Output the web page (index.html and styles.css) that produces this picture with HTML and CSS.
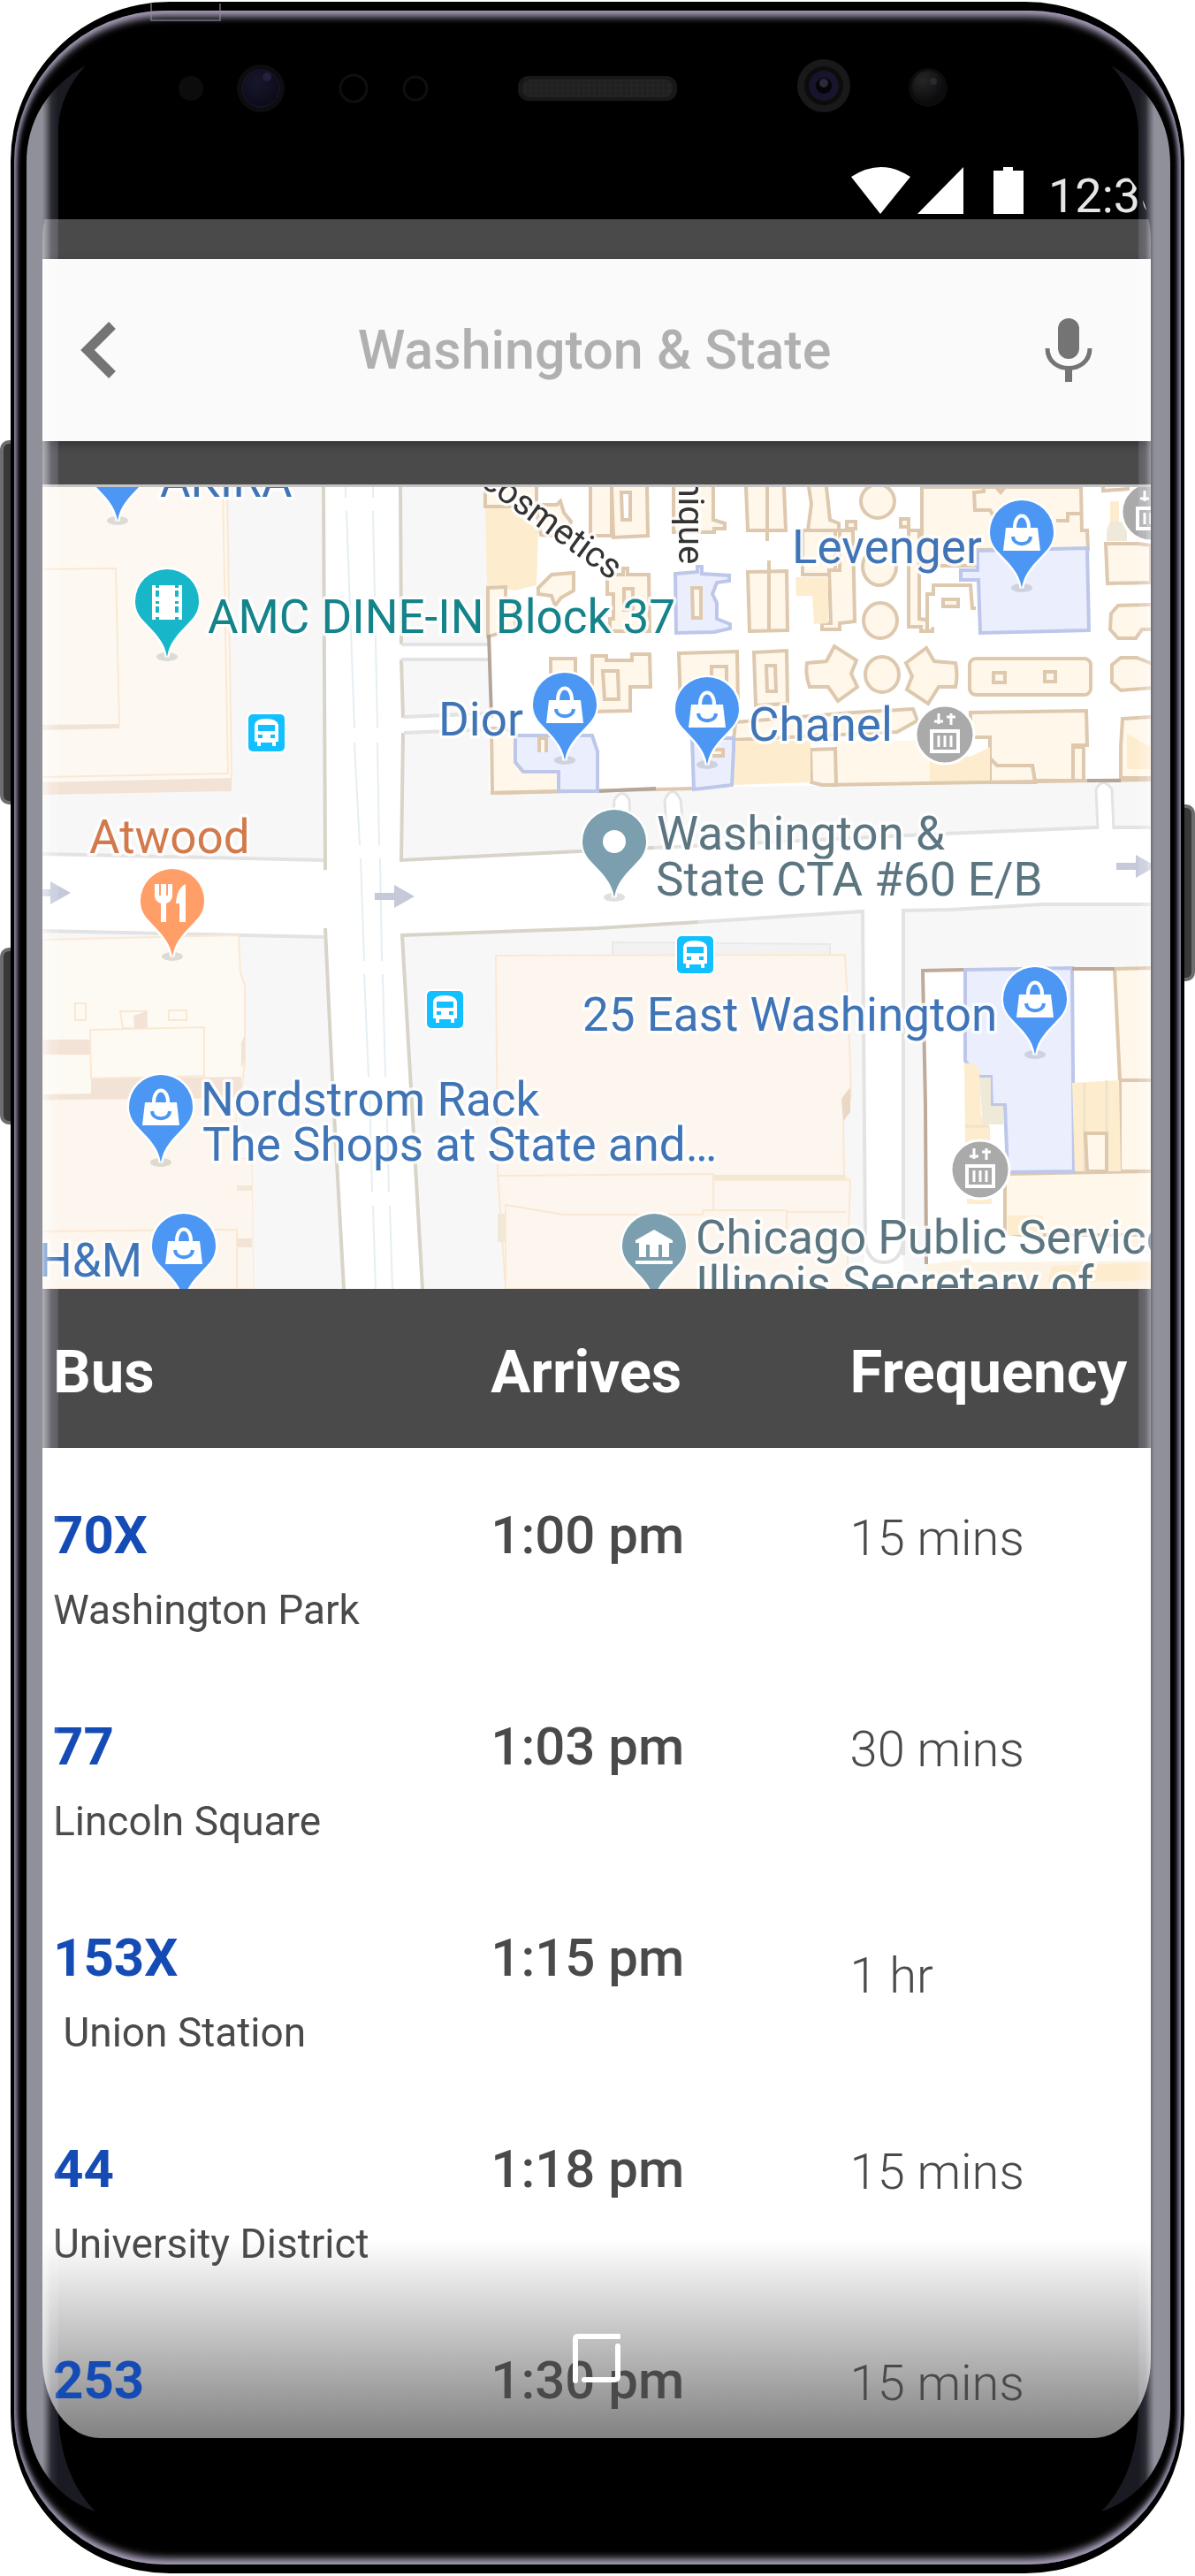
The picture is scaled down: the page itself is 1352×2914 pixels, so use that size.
FILE: index.html
```html
<!DOCTYPE html>
<html lang="en">
<head>
<meta charset="utf-8">
<meta name="viewport" content="width=device-width, initial-scale=1">
<title>Bus arrivals</title>
<link rel="stylesheet" href="styles.css">
</head>
<body>
<main class="device">
  <span class="key key-volume"></span>
  <span class="key key-assistant"></span>
  <span class="key key-power"></span>
  <div class="shell">
    <svg class="antenna" viewBox="0 0 80 20" aria-hidden="true"><path d="M1 0V19H79V0" fill="none" stroke="#8d8798" stroke-opacity=".6" stroke-width="2"/></svg>
    <div class="glass">
      <div class="bezel-top">
        <svg class="sensors" viewBox="200 60 880 80" aria-hidden="true">
          <defs>
            <radialGradient id="lens" cx=".4" cy=".35" r=".7"><stop offset="0" stop-color="#17172c"/><stop offset="1" stop-color="#0a0a18"/></radialGradient>
            <radialGradient id="dark" cx=".35" cy=".3" r=".7"><stop offset="0" stop-color="#262626"/><stop offset="1" stop-color="#0c0c0f"/></radialGradient>
            <pattern id="mesh" width="6" height="6" patternUnits="userSpaceOnUse"><rect width="6" height="6" fill="#202020"/><path d="M0 0H6M0 0V6" stroke="#2c2c2c"/></pattern>
          </defs>
          <circle cx="216" cy="100" r="14" fill="#0c0c0c"/>
          <circle cx="295" cy="100" r="27" fill="#0d0d0d"/><circle cx="295" cy="100" r="21" fill="url(#lens)" stroke="#1d1738"/><circle cx="302" cy="87" r="5" fill="#241f3d"/>
          <circle cx="400" cy="100" r="15" fill="none" stroke="#0f0f0f" stroke-width="3"/>
          <circle cx="470" cy="100" r="13" fill="none" stroke="#0f0f0f" stroke-width="3"/>
          <rect x="586" y="86" width="180" height="28" rx="12" fill="#181818"/><rect x="591" y="90" width="170" height="20" rx="9" fill="url(#mesh)"/>
          <circle cx="932" cy="97" r="30" fill="#191919"/><circle cx="932" cy="97" r="22" fill="#0c0c0c"/><circle cx="932" cy="97" r="17" fill="#17142b"/><circle cx="932" cy="97" r="9" fill="#050508"/><circle cx="932" cy="94" r="5" fill="#2b2a38"/>
          <circle cx="1050" cy="99" r="22" fill="#0c0c0c"/><circle cx="1050" cy="98" r="18" fill="url(#dark)"/><circle cx="1056" cy="92" r="4" fill="#2a2a2a"/>
        </svg>
      </div>

      <div class="screen">
        <div class="statusbar">
          <svg class="status-icons" viewBox="963 188 195 53" aria-hidden="true" fill="#fff">
            <path d="M963 199Q997 177 1030 199L996 241Z"/>
            <path d="M1038 241H1090V188Z"/>
            <path d="M1124 192H1135V188H1146V192H1158V241H1124Z"/>
          </svg>
          <time class="clock">12:30</time>
        </div>

        <div class="toolbar">
          <form class="search">
            <button class="icon-button icon-back" type="button" aria-label="Back">
              <svg width="40" height="64" viewBox="0 0 40 64"><path d="M36 4L8 32L36 60" fill="none" stroke="#747474" stroke-width="11"/></svg>
            </button>
            <input class="search-input" type="text" aria-label="Stop" value="Washington &amp; State">
            <button class="icon-button" type="button" aria-label="Voice search">
              <svg width="54" height="72" viewBox="0 0 54 72"><rect x="15" y="0" width="24" height="46" rx="12" fill="#747474"/><path d="M3 34C3 64 51 64 51 34" fill="none" stroke="#747474" stroke-width="5"/><path d="M23 55H31V72H23Z" fill="#747474"/></svg>
            </button>
          </form>
        </div>

        <svg class="map" viewBox="48 551 1254 907" role="img" aria-label="Map around Washington and State">
          <defs>
            <g id="pin">
              <ellipse cx="0" cy="0" rx="12" ry="5" fill="#000" fill-opacity=".12" stroke="none"/>
              <path d="M0 0C-3 -18 -14 -27 -24 -38C-31 -45 -36 -52 -36 -63A36 36 0 1 1 36 -63C36 -52 31 -45 24 -38C14 -27 3 -18 0 0Z" stroke="#fff" stroke-width="5" paint-order="stroke"/>
            </g>
            <g id="shop">
              <use href="#pin" fill="#4c97f3"/>
              <path d="M-18 -68H18L21 -42H-21Z" fill="#fff"/>
              <path d="M-8 -68C-8 -86 8 -86 8 -68" fill="none" stroke="#fff" stroke-width="4"/>
              <path d="M-10 -58C-9 -47 9 -47 10 -58" fill="none" stroke="#4c97f3" stroke-width="4"/>
            </g>
            <g id="bus">
              <rect width="41" height="42" rx="5" fill="#12c0ff" stroke="#fff" stroke-width="4" paint-order="stroke"/>
              <path d="M7 12Q8 5 20 5T34 12V31H31V36H27V32H14V36H10V31H7Z" fill="#fff"/>
              <path d="M11 12H30V19H11ZM11 23H16V27H11ZM25 23H30V27H25Z" fill="#12c0ff"/>
            </g>
            <g id="lift">
              <circle r="33" fill="#aaa" stroke="#fff" stroke-width="3"/>
              <path d="M-15 -4H15V19H-15Z" fill="none" stroke="#fff" stroke-width="4"/>
              <path d="M-7 1V14M0 1V14M7 1V14" stroke="#fff" stroke-width="3"/>
              <path d="M-7 -24V-12M-12 -15H-2M7 -24V-11M2 -20H12" stroke="#fff" stroke-width="3"/>
            </g>
            <path id="arrow" d="M0 -4H22V-13L45 0L22 13V4H0Z" fill="#c6c9d9"/>
          </defs>

          <rect x="48" y="551" width="1254" height="907" fill="#fff"/>

          <!-- city blocks -->
          <g fill="#f7f7f7">
            <path d="M48 551H366V973L48 966Z"/>
            <path d="M453 551H553V729H453ZM454 746H553V808L455 812ZM455 829L553 824V895L785 891L1302 882V936H1240L1070 943L740 959L676 962L454 973Z"/>
            <path d="M48 1053L367 1060L374 1180L388 1458H48Z"/>
            <path d="M455 1058L676 1050L976 1031L978 1458H478Z"/>
            <path d="M1022 1030L1180 1023H1302V1458H1022Z"/>
          </g>
          <g fill="none" stroke="#d8d4c8" stroke-width="4">
            <path d="M366 551L368 984M453 551L454 729M454 746L456 812M456 829L454 973L676 962L740 959M368 1050L374 1180L378 1260L389 1458M478 1458L455 1058L676 1050L790 1043"/>
          </g>
          <g fill="none" stroke="#e3e3e3" stroke-width="4">
            <path d="M48 966L366 973M48 1053L367 1060M454 729H553M454 746H553M790 1043L976 1031L979 1410M1022 1420V1030L1075 1029L1180 1023H1302M740 959L1070 943L1240 936H1302M457 811L553 807M457 829L553 825"/>
          </g>
          <g fill="none" stroke="#e5eef3" stroke-width="2">
            <path d="M391 551V563M392 578L401 824M401 840L407 956M408 971L412 1087M412 1102L417 1218M418 1233L421 1348M422 1364L425 1458M422 551V563M422 578L427 824M427 840L429 956M430 971L432 1087M433 1102L436 1218M437 1233L440 1348M441 1364L444 1458"/>
          </g>
          <g fill="#fff" stroke="#e3e3e3" stroke-width="3">
            <path d="M692 962L695 905Q704 890 712 905L714 960M755 957L752 905Q761 886 770 905L775 955M1242 938L1240 893Q1248 878 1258 893L1260 938"/>
            <path d="M979 1405Q982 1428 1000 1428T1022 1405" stroke-width="4"/>
          </g>

          <!-- west side buildings -->
          <path d="M48 551H255L262 880L48 885Z" fill="#fdf9f2"/>
          <path d="M48 885L262 880V895L48 899ZM48 820L135 819V824L48 826Z" fill="#f3e3d6"/>
          <g fill="none" stroke="#fbe8d3" stroke-width="2">
            <path d="M252 551L258 875L48 879M257 551L262 880M48 644L131 643L135 820"/>
          </g>
          <path d="M48 1063L270 1058L272 1100L277 1115V1200L272 1245H48Z" fill="#fdfaf3" stroke="#fbe8d3" stroke-width="2"/>
          <path d="M48 1176H102V1193H48ZM103 1220L273 1218V1243L48 1245V1238L103 1237ZM273 1180L277 1170V1200L273 1208Z" fill="#f3e3d6"/>
          <path d="M48 1244L267 1242L268 1310L285 1311L287 1458H48Z" fill="#fcf6ee" stroke="#fbe8d3"/>
          <g fill="#fdfaf3" stroke="#fbe8d3" stroke-width="2">
            <path d="M102 1165L231 1162V1217L103 1220ZM85 1135H97V1154H85ZM191 1143H211V1154H191ZM136 1144H166V1163H139Z"/>
            <path d="M48 1393L268 1391V1458" fill="none"/>
          </g>
          <path d="M151 1149L166 1144V1163H152ZM268 1401H285V1411H268Z" fill="#f3e3d6"/>
          <path d="M268 1341H285V1347H268Z" fill="#f3e9d8"/>

          <!-- block south of Washington -->
          <path d="M693 1080V1066L939 1068V1080" fill="#f2f2f2" stroke="#e9e9e9" stroke-width="2"/>
          <path d="M561 1081L956 1080L960 1150L963 1240L954 1270L955 1330L962 1336L958 1458H572L563 1325Z" fill="#fcf6ee" stroke="#fbe8d3" stroke-width="2"/>
          <path d="M952 1243L962 1230V1258L954 1268Z" fill="#ead7c4"/>
          <path d="M807 1329H956V1334H807ZM563 1373H571V1405H563Z" fill="#f1e8d6"/>
          <path d="M564 1330L807 1328V1369M572 1458V1363L638 1374H795V1369H890V1390M890 1371H957M807 1335H962" fill="none" stroke="#fbe8d3" stroke-width="2"/>

          <!-- department store floor plan -->
          <path d="M549 573L576 575L609 600L607 662L583 668L551 663Z" fill="#fdedce"/>
          <g fill="#fff7ea" stroke="#dec8ae" stroke-width="4">
            <path d="M549 551V573H607L609 590L612 605L640 607L646 590L638 580L634 567L630 571H607V551"/>
            <path d="M552 665L572 664V676L583 680V712L552 720Z"/>
            <path d="M609 665L624 650L649 648V668L635 676L628 685L624 674L609 672Z"/>
            <path d="M623 762V745H651V762M670 805V742H686V747H715V740H735L736 777H713V804ZM682 759H699L700 791H684Z"/>
            <path d="M668 551V606H692V551M692 551L694 608L733 606L732 551M703 557H713V588H704Z"/>
            <path d="M762 551V602H808V598H820V592L807 588V551"/>
            <path d="M844 551L846 600H889L887 551M868 551V612"/>
            <path d="M846 647L890 646L891 713L848 714ZM870 634V713"/>
            <path d="M687 650H705V643H710V650H734L735 714H690V700H694V672H687ZM706 666H716V690H706Z"/>
            <path d="M915 551L918 570L914 600H949V592L939 588L935 551"/>
            <path d="M958 590H968V598H958ZM1019 587H1028V596H1019ZM908 600H945V650H908Z"/>
            <path d="M938 645H950V600H965L967 703L950 705V712H930V705H940Z"/>
            <path d="M1028 600H1040V700L1055 702V714H1042V709H1028Z"/>
            <path d="M1043 551V640H1106V622L1231 621L1230 600H1224L1223 551Z"/>
            <path d="M1113 551V556L1102 557L1103 577H1120L1128 590M1222 581H1208V589H1195M1127 551L1132 557L1137 551" fill="none"/>
            <path d="M1049 712V672H1056V662H1098L1100 688H1104" fill="#fff"/>
            <path d="M1067 678H1084V686H1067ZM1251 615H1288L1302 617V659L1253 660Z"/>
            <path d="M1257 694L1265 685L1304 684V712H1292L1285 722H1265L1256 712ZM1258 752L1268 744H1286L1304 751V778L1268 781L1258 772ZM1248 551V555L1278 553"/>
            <ellipse cx="993" cy="567" rx="19" ry="19"/><ellipse cx="995" cy="641" rx="19" ry="21"/>
            <ellipse cx="996" cy="702" rx="19" ry="20"/><ellipse cx="998" cy="763" rx="19" ry="20"/>
            <path d="M768 739L834 737L835 800H770ZM805 785V754H822V785M853 738L890 736L891 796L855 798ZM867 753H877L878 782H868Z"/>
            <path d="M913 750L935 748L944 731L969 747L963 762L970 777L948 793L937 777H916Q911 764 913 750Z"/>
            <path d="M1025 750L1048 733L1057 748L1081 750Q1084 764 1081 777H1062L1050 796L1026 780L1032 765Z"/>
            <rect x="1097" y="745" width="137" height="41" rx="7"/><path d="M1124 761H1137V772H1124ZM1182 760H1194V771H1182Z"/>
            <path d="M556 824H572L583 832V862L592 873H632V895L557 897Z"/>
            <path d="M832 817L965 806L1033 802L1038 815L1015 828L830 837Z"/>
            <path d="M945 838H1052V887L946 888Z" stroke="none"/>
            <path d="M1098 806L1229 804L1230 843H1214V883H1171L1168 866H1128L1120 858V834H1098Z"/>
            <path d="M1120 858V885H1171L1168 866H1128ZM1214 845H1226V883H1214ZM1270 813L1304 811V880H1268V845Z"/>
            <path d="M917 848L945 847L946 888H930L918 885Z"/>
          </g>
          <path d="M829 838H917V885L829 888ZM1052 850L1098 856L1120 845V884L1052 887ZM1275 830L1302 845V870H1275ZM900 653H937V705L921 706L919 674H901ZM1256 567H1266V590H1256Z" fill="#fdedce"/>
          <path d="M1252 600L1256 590H1275V612H1252Z" fill="#efe9d9"/>
          <path d="M557 897L785 892M930 888L1302 882" fill="none" stroke="#dec8ae" stroke-width="4"/>
          <path d="M553 718L556 812M676 895L742 892M1230 883H1268" fill="none" stroke="#b3a59a" stroke-width="4"/>
          <g fill="#ebeefd" stroke="#bdc7ea" stroke-width="4">
            <path d="M764 649L789 647V641H794V649L825 651V657L811 659L806 672L811 682V700L826 706V711L808 715L765 716Z"/>
            <path d="M1106 623L1230 620L1232 713L1109 716L1107 656H1087V645H1106Z"/>
            <path d="M583 832H670L676 850V895H632V873H592L583 862Z"/>
            <path d="M783 835H830V847L828 888L785 893Z"/>
          </g>
          <path d="M783 665H793V699H784ZM610 851V835H618V851M806 848H818V855H806" fill="#fff7ea" stroke="#dec8ae" stroke-width="4"/>

          <!-- south-east buildings -->
          <path d="M1044 1098L1302 1094V1458H1049Z" fill="#fff"/>
          <g fill="#fff7ea" stroke="#dec8ae" stroke-width="4">
            <path d="M1261 1096L1304 1095V1222H1267ZM1267 1222H1304V1325H1267ZM1137 1328L1304 1325V1397H1137Z"/>
          </g>
          <path d="M1049 1430L1302 1400V1458H1049Z" fill="#fdf3e4"/>
          <path d="M1065 1392L1140 1397L1302 1418L1302 1426L1100 1428Z" fill="#fff"/>
          <path d="M1092 1097L1213 1095L1215 1325L1140 1326L1137 1250H1122L1121 1218H1108L1092 1200Z" fill="#ebeefd" stroke="#bdc7ea" stroke-width="4"/>
          <path d="M1213 1225L1266 1222L1268 1325H1216ZM1091 1203Q1105 1200 1108 1212L1110 1260L1120 1275V1295H1092ZM1190 1432L1302 1428V1448L1185 1452ZM1140 1375H1180V1397H1140ZM1094 1356H1122V1362H1094Z" fill="#fdedce"/>
          <path d="M1227 1225V1325M1252 1222V1282M1092 1274H1119" stroke="#efe3cb" stroke-width="3"/>
          <path d="M1228 1282H1252V1325H1230Z" fill="#fff7ea" stroke="#dec8ae" stroke-width="4"/>
          <path d="M1108 1219H1121V1251H1135V1272H1112Z" fill="#efe9d9"/>
          <path d="M1121 1275H1134V1300H1121Z" fill="#fff"/>
          <path d="M1048 1430L1047 1250L1044 1098L1090 1097M1213 1096H1261" fill="none" stroke="#c0aa99" stroke-width="4"/>

          <use href="#arrow" x="35" y="1010"/><use href="#arrow" x="424" y="1014"/><use href="#arrow" x="1263" y="980"/>
          <use href="#bus" x="281" y="808"/><use href="#bus" x="483" y="1121"/><use href="#bus" x="766" y="1059"/>
          <use href="#lift" x="1069" y="831"/><use href="#lift" x="1109" y="1323"/><use href="#lift" x="1302" y="579"/>

          <use href="#shop" x="133" y="589"/><use href="#shop" x="639" y="860"/><use href="#shop" x="1156" y="665"/>
          <use href="#shop" x="800" y="865"/><use href="#shop" x="182" y="1315"/><use href="#shop" x="208" y="1472"/><use href="#shop" x="1171" y="1193"/>
          <use href="#pin" x="189" y="743" fill="#18b6c9"/>
          <path d="M172 662H206V701H172Z" fill="#fff"/>
          <path d="M178 662V701M200 662V701" stroke="#18b6c9" stroke-width="4" stroke-dasharray="3 3 7 5"/>
          <use href="#pin" x="195" y="1082" fill="#ff9e67"/>
          <path d="M175 1000V1014Q176 1020 182 1022V1043H188V1022Q194 1020 195 1014V1000ZM210 1000Q200 1004 199 1022H203V1043H210Z" fill="#fff"/>
          <path d="M181 998V1013M189 998V1013" stroke="#ff9e67" stroke-width="2"/>
          <use href="#pin" x="695" y="1015" fill="#7b9faf"/><circle cx="695" cy="952" r="13" fill="#fff"/>
          <use href="#pin" x="740" y="1472" fill="#7b9faf"/>
          <path d="M719 1403L740 1391L761 1403V1406H719ZM723 1406H757V1422H723ZM719 1426H761V1430H719Z" fill="#fff"/>
          <path d="M733 1408V1422M747 1408V1422" stroke="#7b9faf" stroke-width="4"/>

          <g class="labels">
            <g class="label-shop">
              <text x="181" y="562">AKIRA</text>
              <text x="896" y="637">Levenger</text>
              <text x="496" y="832">Dior</text>
              <text x="847" y="838">Chanel</text>
              <text x="659" y="1166">25 East Washington</text>
              <text x="227" y="1262">Nordstrom Rack</text>
              <text x="229" y="1313">The Shops at State and…</text>
              <text x="44" y="1444">H&amp;M</text>
            </g>
            <text class="label-cinema" x="235" y="716">AMC DINE-IN Block 37</text>
            <text class="label-food" x="101" y="965">Atwood</text>
            <g class="label-civic">
              <text x="743" y="961">Washington &amp;</text>
              <text x="742" y="1013">State CTA #60 E/B</text>
              <text x="787" y="1418">Chicago Public Service</text>
              <text x="787" y="1470">Illinois Secretary of</text>
            </g>
            <g class="label-dept">
              <text transform="translate(542 548) rotate(36)">cosmetics</text>
              <text transform="translate(768 495) rotate(90)">Clinique</text>
            </g>
          </g>
        </svg>

        <table class="arrivals">
          <thead>
            <tr><th scope="col" class="col-bus">Bus</th><th scope="col" class="col-time">Arrives</th><th scope="col">Frequency</th></tr>
          </thead>
          <tbody>
            <tr><td><a class="route" href="#70x">70X</a><span class="place">Washington Park</span></td><td class="time">1:00 pm</td><td class="freq">15 mins</td></tr>
            <tr><td><a class="route" href="#77">77</a><span class="place">Lincoln Square</span></td><td class="time">1:03 pm</td><td class="freq">30 mins</td></tr>
            <tr><td><a class="route" href="#153x">153X</a><span class="place">&nbsp;Union Station</span></td><td class="time">1:15 pm</td><td class="freq freq-long">1 hr</td></tr>
            <tr><td><a class="route" href="#44">44</a><span class="place">University District</span></td><td class="time">1:18 pm</td><td class="freq">15 mins</td></tr>
            <tr class="cut"><td><a class="route" href="#253">253</a></td><td class="time">1:30 pm</td><td class="freq">15 mins</td></tr>
          </tbody>
        </table>
        <button class="home" type="button" aria-label="Home">
          <svg width="54" height="56" viewBox="0 0 54 56"><path d="M3 53V6Q3 3 6 3H52M51 14V48Q51 52 47 52H13" fill="none" stroke="#fff" stroke-width="6" stroke-linecap="round"/></svg>
        </button>
      </div>

      <svg class="edge edge-left" viewBox="30 74 78 2767" preserveAspectRatio="none" aria-hidden="true">
        <defs><linearGradient id="curve" gradientUnits="userSpaceOnUse" x1="30" y1="0" x2="66" y2="0"><stop offset="0" stop-color="#90909a"/><stop offset=".5" stop-color="#90909a"/><stop offset=".62" stop-color="#6b6b74"/><stop offset=".78" stop-color="#2c2c35"/><stop offset="1" stop-color="#1a1a22"/></linearGradient></defs>
        <path d="M97 74C55 98 30 135 30 185V2725C30 2780 60 2825 108 2841C82 2815 66 2775 66 2725V150C66 120 78 95 97 74Z" fill="url(#curve)"/>
      </svg>
      <svg class="edge edge-right" viewBox="30 74 78 2767" preserveAspectRatio="none" aria-hidden="true">
        <path d="M97 74C55 98 30 135 30 185V2725C30 2780 60 2825 108 2841C82 2815 66 2775 66 2725V150C66 120 78 95 97 74Z" fill="url(#curve)"/>
      </svg>
    </div>
  </div>
</main>
</body>
</html>
```
FILE: styles.css
```css
* { box-sizing: border-box; }

body {
  margin: 0;
  background: #fff;
  color: #4a4a4a;
  font-family: Roboto, "Liberation Sans", sans-serif;
}

button {
  padding: 0;
  border: 0;
  background: none;
}

button svg { display: block; }

/* handset */
.device {
  position: relative;
  padding: 2px 12px 0;
}

.key {
  position: absolute;
  width: 24px;
  background: #383838;
  border: 4px solid #6e6e6e;
  border-radius: 10px;
}
.key-volume { left: 0; top: 498px; height: 412px; }
.key-assistant { left: 0; top: 1072px; height: 200px; }
.key-power { right: 0; top: 910px; height: 200px; }

.shell {
  position: relative;
  padding: 10px 4px;
  background: #000;
  border-radius: 180px;
}

.antenna {
  position: absolute;
  left: 158px;
  top: 2px;
  width: 80px;
  height: 20px;
  z-index: 1;
}

.glass {
  position: relative;
  isolation: isolate;
  padding: 0 34px 143px 32px;
  background: #000;
  border-radius: 172px;
  box-shadow: inset 0 9px 9px -2px #a098b0, inset 0 -9px 9px -2px #a098b0, inset 3px 0 5px #77718a, inset -3px 0 5px #77718a;
}

.bezel-top {
  height: 170px;
  padding: 48px 20px 0 152px;
}

.sensors {
  display: block;
  width: 880px;
  max-width: 100%;
  height: 80px;
}

.edge {
  position: absolute;
  top: 62px;
  width: 78px;
  height: calc(100% - 122px);
  mix-blend-mode: screen;
  pointer-events: none;
}
.edge-left { left: 14px; }
.edge-right { right: 12px; transform: scaleX(-1); }

/* screen */
.screen {
  position: relative;
  overflow: hidden;
  background: #000;
  border-radius: 65px / 90px;
}

.statusbar {
  display: flex;
  justify-content: flex-end;
  align-items: center;
  gap: 28px;
  height: 66px;
  overflow: hidden;
  padding-left: 32px;
}

.status-icons {
  flex: none;
  width: 195px;
  height: 53px;
}

.clock {
  flex: none;
  width: 116px;
  padding-top: 14px;
  color: #e6e6e6;
  font-size: 54px;
  line-height: 60px;
}

.toolbar {
  padding: 45px 0 49px;
  background: #4a4a4a;
}

.search {
  display: flex;
  align-items: center;
  gap: 24px;
  height: 206px;
  padding: 0 66px 0 43px;
  background: #fafafa;
  box-shadow: 0 4px 10px rgba(0, 0, 0, .3);
}

.icon-button { flex: none; }
.icon-back { width: 72px; }

.search-input {
  flex: 1;
  min-width: 0;
  padding: 0;
  border: 0;
  background: none;
  color: #b0b0b0;
  font: 500 61px/72px Roboto, "Liberation Sans", sans-serif;
  text-align: center;
}

.map {
  display: block;
  width: 100%;
  border-top: 3px solid #c4c4c4;
}

.labels text {
  font-size: 53px;
  paint-order: stroke;
  stroke: #fff;
  stroke-opacity: .8;
  stroke-width: 7px;
  stroke-linejoin: round;
}
.labels .label-dept text { font-size: 40px; }
.label-shop { fill: #3f74b6; }
.label-cinema { fill: #14838a; }
.label-food { fill: #d37a4c; }
.label-civic { fill: #5b7581; }
.label-dept { fill: #333; }

/* arrivals */
.arrivals {
  width: 100%;
  table-layout: fixed;
  border-collapse: collapse;
  background: linear-gradient(to top, #828282, #fff 225px);
}

.arrivals th {
  padding: 56px 0 48px 12px;
  background: #4a4a4a;
  color: #fff;
  font-size: 67px;
  line-height: 76px;
  text-align: left;
}

.col-bus { width: 39.5%; }
.col-time { width: 32.4%; }

.arrivals td {
  height: 239px;
  padding: 64px 0 0 12px;
  vertical-align: top;
}
.arrivals .cut td { height: 164px; }

.route {
  display: block;
  color: #154bb4;
  font-size: 60px;
  font-weight: 700;
  line-height: 70px;
  text-decoration: none;
}

.place {
  display: block;
  margin-top: 22px;
  font-size: 46px;
  line-height: 54px;
}

.time {
  font-size: 60px;
  font-weight: 500;
  line-height: 70px;
}

.arrivals .freq {
  padding-top: 67px;
  font-size: 56px;
  font-weight: 300;
  line-height: 70px;
}
.arrivals .freq-long { padding-top: 84px; }

.home {
  position: absolute;
  left: 50%;
  bottom: 62px;
  margin-left: -27px;
}
```
